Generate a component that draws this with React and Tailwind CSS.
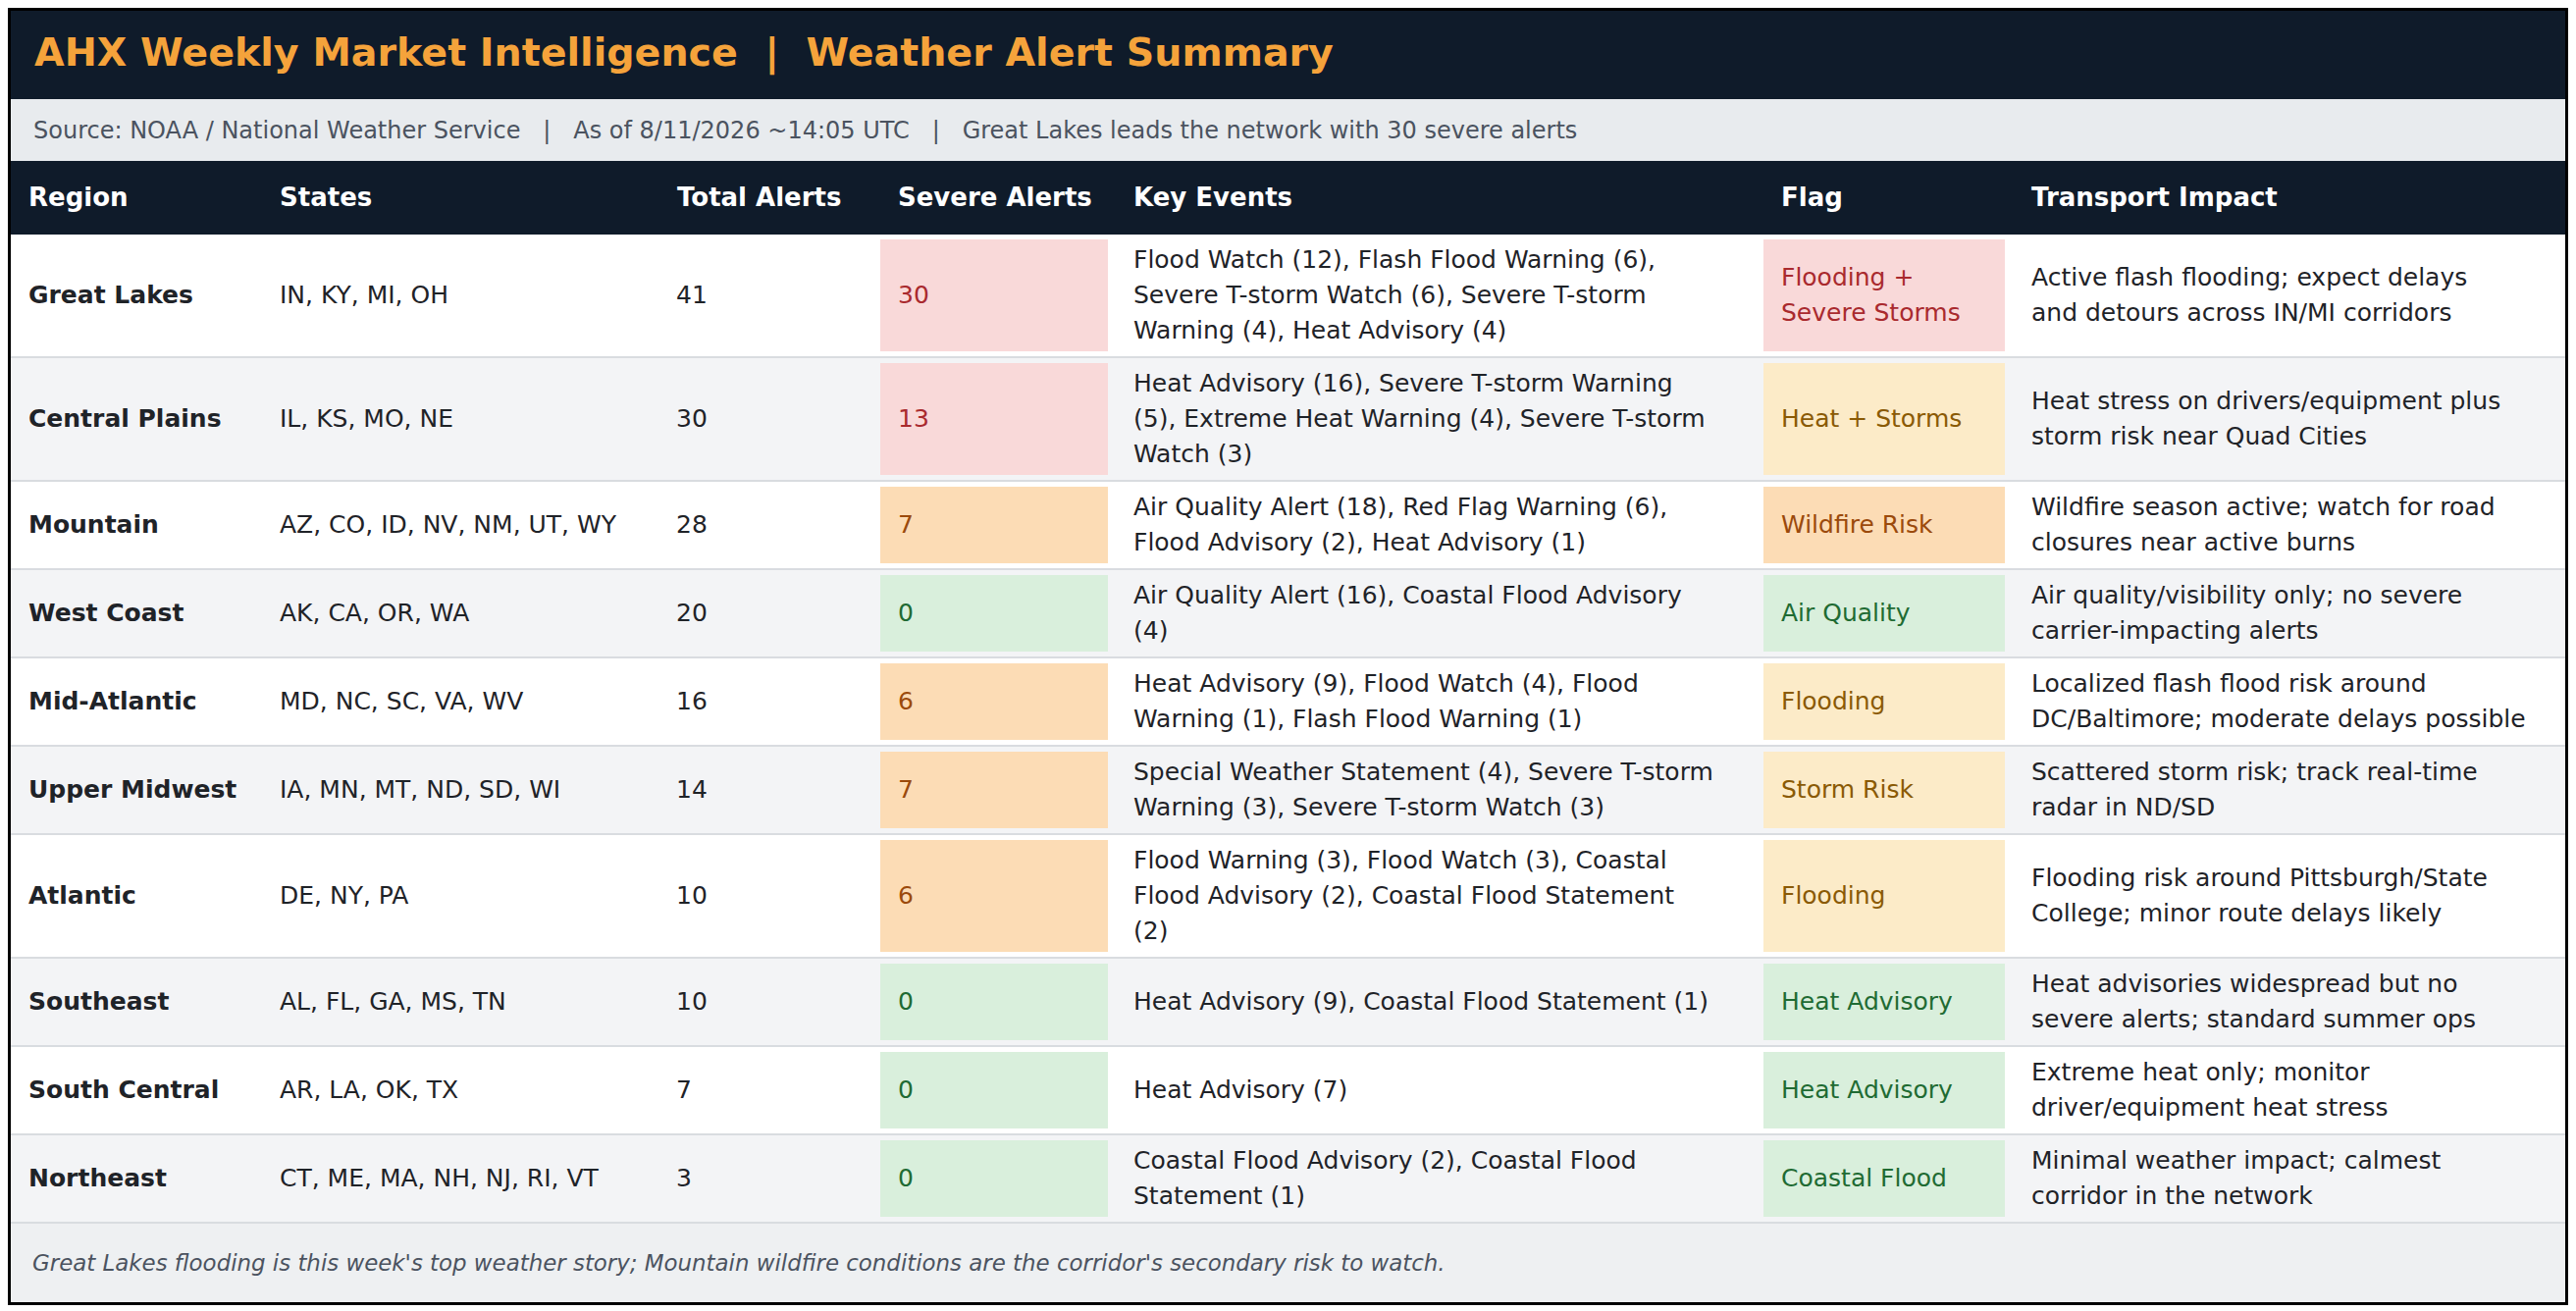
import React from "react";

const tones = {
  red: "bg-[#f9d9d9] text-[#a92a2e]",
  orange: "bg-[#fcdcb5] text-[#9b4a0c]",
  yellow: "bg-[#fcebc8] text-[#8a5a05]",
  green: "bg-[#d9efdc] text-[#1f6b33]",
};

const rows = [
  {
    region: "Great Lakes",
    states: "IN, KY, MI, OH",
    total: 41,
    severe: 30,
    severeTone: "red",
    events: ["Flood Watch (12), Flash Flood Warning (6),", "Severe T-storm Watch (6), Severe T-storm", "Warning (4), Heat Advisory (4)"],
    flag: ["Flooding +", "Severe Storms"],
    flagTone: "red",
    impact: ["Active flash flooding; expect delays", "and detours across IN/MI corridors"],
  },
  {
    region: "Central Plains",
    states: "IL, KS, MO, NE",
    total: 30,
    severe: 13,
    severeTone: "red",
    events: ["Heat Advisory (16), Severe T-storm Warning", "(5), Extreme Heat Warning (4), Severe T-storm", "Watch (3)"],
    flag: ["Heat + Storms"],
    flagTone: "yellow",
    impact: ["Heat stress on drivers/equipment plus", "storm risk near Quad Cities"],
  },
  {
    region: "Mountain",
    states: "AZ, CO, ID, NV, NM, UT, WY",
    total: 28,
    severe: 7,
    severeTone: "orange",
    events: ["Air Quality Alert (18), Red Flag Warning (6),", "Flood Advisory (2), Heat Advisory (1)"],
    flag: ["Wildfire Risk"],
    flagTone: "orange",
    impact: ["Wildfire season active; watch for road", "closures near active burns"],
  },
  {
    region: "West Coast",
    states: "AK, CA, OR, WA",
    total: 20,
    severe: 0,
    severeTone: "green",
    events: ["Air Quality Alert (16), Coastal Flood Advisory", "(4)"],
    flag: ["Air Quality"],
    flagTone: "green",
    impact: ["Air quality/visibility only; no severe", "carrier-impacting alerts"],
  },
  {
    region: "Mid-Atlantic",
    states: "MD, NC, SC, VA, WV",
    total: 16,
    severe: 6,
    severeTone: "orange",
    events: ["Heat Advisory (9), Flood Watch (4), Flood", "Warning (1), Flash Flood Warning (1)"],
    flag: ["Flooding"],
    flagTone: "yellow",
    impact: ["Localized flash flood risk around", "DC/Baltimore; moderate delays possible"],
  },
  {
    region: "Upper Midwest",
    states: "IA, MN, MT, ND, SD, WI",
    total: 14,
    severe: 7,
    severeTone: "orange",
    events: ["Special Weather Statement (4), Severe T-storm", "Warning (3), Severe T-storm Watch (3)"],
    flag: ["Storm Risk"],
    flagTone: "yellow",
    impact: ["Scattered storm risk; track real-time", "radar in ND/SD"],
  },
  {
    region: "Atlantic",
    states: "DE, NY, PA",
    total: 10,
    severe: 6,
    severeTone: "orange",
    events: ["Flood Warning (3), Flood Watch (3), Coastal", "Flood Advisory (2), Coastal Flood Statement", "(2)"],
    flag: ["Flooding"],
    flagTone: "yellow",
    impact: ["Flooding risk around Pittsburgh/State", "College; minor route delays likely"],
  },
  {
    region: "Southeast",
    states: "AL, FL, GA, MS, TN",
    total: 10,
    severe: 0,
    severeTone: "green",
    events: ["Heat Advisory (9), Coastal Flood Statement (1)"],
    flag: ["Heat Advisory"],
    flagTone: "green",
    impact: ["Heat advisories widespread but no", "severe alerts; standard summer ops"],
  },
  {
    region: "South Central",
    states: "AR, LA, OK, TX",
    total: 7,
    severe: 0,
    severeTone: "green",
    events: ["Heat Advisory (7)"],
    flag: ["Heat Advisory"],
    flagTone: "green",
    impact: ["Extreme heat only; monitor", "driver/equipment heat stress"],
  },
  {
    region: "Northeast",
    states: "CT, ME, MA, NH, NJ, RI, VT",
    total: 3,
    severe: 0,
    severeTone: "green",
    events: ["Coastal Flood Advisory (2), Coastal Flood", "Statement (1)"],
    flag: ["Coastal Flood"],
    flagTone: "green",
    impact: ["Minimal weather impact; calmest", "corridor in the network"],
  },
];

const cols = "grid grid-cols-[254px_406px_221px_242px_658px_256px_566px]";
const headers = [
  ["Region", "pl-[18px]"],
  ["States", "pl-[20px]"],
  ["Total Alerts", "pl-[19px]"],
  ["Severe Alerts", "pl-[23px]"],
  ["Key Events", "pl-[21px]"],
  ["Flag", "pl-[23px]"],
  ["Transport Impact", "pl-[22px]"],
];

function Cell({ children, className = "pl-[18px]" }) {
  return <div className={`flex items-center py-2 pr-2 ${className}`}>{children}</div>;
}

function Lines({ lines }) {
  return (
    <div className="flex flex-col">
      {lines.map((l) => (
        <span key={l} className="whitespace-nowrap">
          {l}
        </span>
      ))}
    </div>
  );
}

function Badge({ tone, children }) {
  return (
    <div className="flex p-[5px]">
      <div className={`flex flex-1 items-center px-[18px] ${tones[tone]}`}>{children}</div>
    </div>
  );
}

export default function App() {
  return (
    <div className="min-h-screen bg-white p-2 font-['DejaVu_Sans',sans-serif]">
      <div className="border-[3px] border-black">
        <div className="flex h-[90px] items-center bg-[#0f1b2a] px-[24px] pb-1">
          <h1 className="whitespace-pre text-[39.6px] font-bold text-[#f5a33b]">
            AHX Weekly Market Intelligence  |  Weather Alert Summary
          </h1>
        </div>
        <div className="flex h-[63px] items-center bg-[#e8ebee] px-[23px] text-[24px] text-[#4b5360]">
          <p className="whitespace-pre">
            Source: NOAA / National Weather Service   |   As of 8/11/2026 ~14:05 UTC   |   Great Lakes leads the network with 30 severe alerts
          </p>
        </div>

        <div className={`${cols} h-[75px] bg-[#0f1b2a] text-[26px] font-bold text-white`}>
          {headers.map(([h, pad]) => (
            <div key={h} className={`flex items-center ${pad}`}>
              {h}
            </div>
          ))}
        </div>

        {rows.map((r, i) => (
          <div
            key={r.region}
            className={`${cols} border-b-2 border-[#d9dce0] text-[25px] leading-[36px] text-[#1f2328] ${
              i % 2 === 1 ? "bg-[#f3f4f6]" : "bg-white"
            }`}
          >
            <Cell className="pl-[18px] font-bold">{r.region}</Cell>
            <Cell className="pl-[20px]">{r.states}</Cell>
            <Cell>{r.total}</Cell>
            <Badge tone={r.severeTone}>{r.severe}</Badge>
            <Cell className="pl-[21px]">
              <Lines lines={r.events} />
            </Cell>
            <Badge tone={r.flagTone}>
              <Lines lines={r.flag} />
            </Badge>
            <Cell className="pl-[22px]">
              <Lines lines={r.impact} />
            </Cell>
          </div>
        ))}

        <div className="flex h-[80px] items-center bg-[#eef0f2] px-[22px] text-[22.9px] italic text-[#4b5360]">
          Great Lakes flooding is this week's top weather story; Mountain wildfire conditions are the corridor's secondary risk to watch.
        </div>
      </div>
    </div>
  );
}
